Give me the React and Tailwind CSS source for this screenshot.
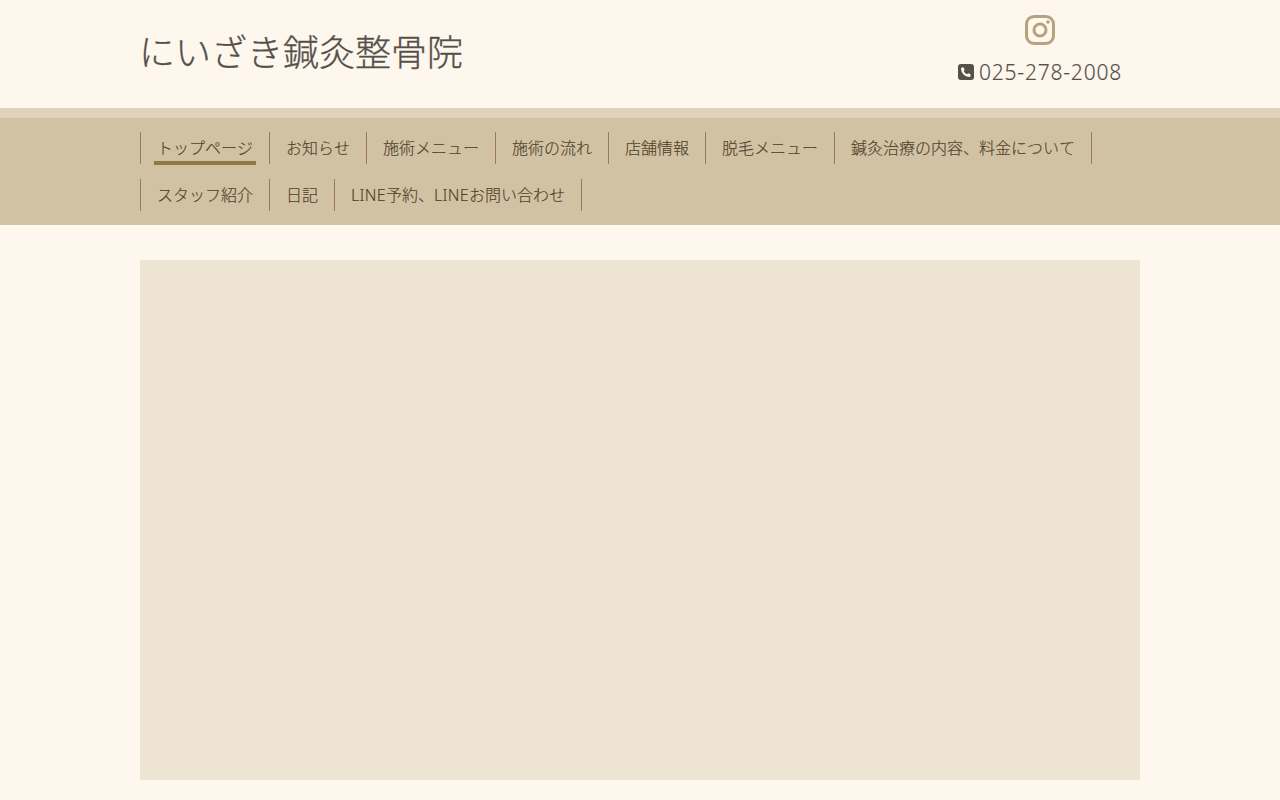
import React from "react";

const row1 = ["トップページ", "お知らせ", "施術メニュー", "施術の流れ", "店舗情報", "脱毛メニュー", "鍼灸治療の内容、料金について"];
const font = { fontFamily: '"Noto Sans", "Noto Sans CJK JP", sans-serif' };
const line = <span className="tracking-[0.3px]">LINE</span>;
const row2 = ["スタッフ紹介", "日記", <>{line}予約、{line}お問い合わせ</>];

function NavRow({ items, activeFirst }) {
  return (
    <ul className="flex border-l border-[#9a7b52] h-8 w-fit">
      {items.map((t, i) => (
        <li key={i} className="relative h-8 px-4 border-r border-[#9a7b52] text-[16px] leading-8 font-light text-[#52402a] whitespace-nowrap [font-kerning:none] [-webkit-text-stroke:0.15px_#52402a]">
          {t}
          {activeFirst && i === 0 && <span className="absolute left-[13px] right-[13px] bottom-[-1px] h-1 bg-[#927748]" />}
        </li>
      ))}
    </ul>
  );
}

export default function App() {
  return (
    <div className="min-h-[800px] bg-[#fef7ed] overflow-hidden" style={font}>
      <header className="h-[108px] w-[1000px] mx-auto flex justify-between">
        <div className="pt-[28px] -ml-px text-[36px] leading-[50px] font-light text-[#55504a] [-webkit-text-stroke:0.3px_#55504a]">にいざき鍼灸整骨院</div>
        <div className="w-[200px] flex flex-col items-center pt-[15px]">
          <svg width="30" height="30" viewBox="0 0 30 30" fill="none" stroke="#b7a27b" strokeWidth="3">
            <rect x="1.5" y="1.5" width="27" height="27" rx="7.5" />
            <circle cx="15" cy="15" r="6" />
            <circle cx="23" cy="7" r="1.8" fill="#b7a27b" stroke="none" />
          </svg>
          <div className="mt-[12px] flex items-center text-[21px] leading-[30px] font-light tracking-[0.8px] text-[#55504a] [-webkit-text-stroke:0.15px_#55504a]">
            <svg width="16" height="16" viewBox="0 0 16 16" className="mr-[5px]">
              <rect width="16" height="16" rx="3" fill="#55504a" />
              <path d="M5.4 3.2 6.7 5.8 5.7 6.9C6.3 8.3 7.7 9.7 9.1 10.3L10.2 9.3 12.8 10.6 12.3 12.5C12.2 12.8 12 13 11.6 13 7 12.8 3.2 9 3 4.4 3 4 3.2 3.8 3.5 3.7Z" fill="#fef7ed" />
            </svg>
            025-278-2008
          </div>
        </div>
      </header>
      <nav className="h-[117px] bg-[#d1c2a4] border-t-[10px] border-[#e0d3bd]">
        <div className="w-[1000px] mx-auto pt-[14px] flex flex-col gap-[15px]">
          <NavRow items={row1} activeFirst />
          <NavRow items={row2} />
        </div>
      </nav>
      <main className="w-[1000px] h-[520px] mx-auto mt-[35px] bg-[#ede4d3] rounded-[2px]" />
    </div>
  );
}
